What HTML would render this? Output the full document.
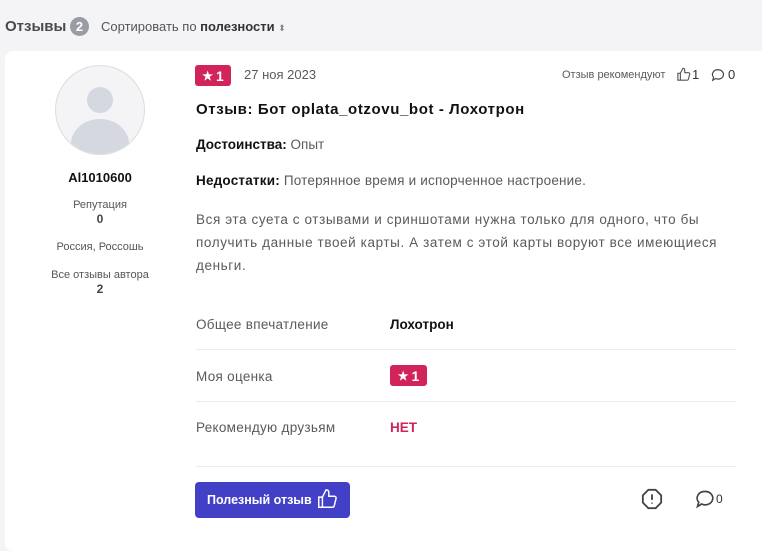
<!DOCTYPE html>
<html><head><meta charset="utf-8"><style>
*{margin:0;padding:0;box-sizing:border-box}
body{width:762px;height:540px;overflow:hidden;background:#f4f4f6;font-family:"Liberation Sans",sans-serif;color:#111;position:relative}
.a{position:absolute;white-space:nowrap}
.card{position:absolute;left:5px;top:51px;width:770px;height:500px;background:#fff;border-radius:8px}
.g{color:#5a5a5a}
.badge{position:absolute;background:#d0245a;color:#fff;border-radius:3px;font-weight:bold;font-size:14px;display:flex;align-items:center;justify-content:center;gap:3px}
.badge i{font-style:normal;font-size:12px}
.line{position:absolute;left:196px;width:540px;height:1px;background:#ebebeb}
</style></head><body>
<div class="a" style="left:5px;top:18px;font-size:15px;font-weight:bold;color:#4a4a4a">Отзывы</div>
<div class="a" style="left:70px;top:17px;width:19px;height:19px;border-radius:50%;background:#9a9ca3;color:#fff;font-size:13px;font-weight:bold;text-align:center;line-height:19px">2</div>
<div class="a" style="left:101px;top:19px;font-size:13px;color:#555">Сортировать по <b style="color:#333">полезности</b> <span style="font-size:9px;color:#888">⬍</span></div>
<div class="card"></div>
<div class="a" style="left:55px;top:65px;width:90px;height:90px;border-radius:50%;border:1px solid #ddd;background:#f4f4f6;overflow:hidden">
<div style="position:absolute;left:31px;top:21px;width:26px;height:26px;border-radius:50%;background:#d5d8e0"></div>
<div style="position:absolute;left:15px;top:53px;width:58px;height:50px;border-radius:50%;background:#d5d8e0"></div></div>
<div class="a" style="left:0;width:200px;text-align:center;top:170px;font-size:13px;font-weight:bold">Al1010600</div>
<div class="a" style="left:0;width:200px;text-align:center;top:199px;font-size:11px;color:#555">Репутация</div>
<div class="a" style="left:0;width:200px;text-align:center;top:212px;font-size:12px;font-weight:bold;color:#444">0</div>
<div class="a" style="left:0;width:200px;text-align:center;top:241px;font-size:11px;color:#555">Россия, Россошь</div>
<div class="a" style="left:0;width:200px;text-align:center;top:269px;font-size:11px;color:#555">Все отзывы автора</div>
<div class="a" style="left:0;width:200px;text-align:center;top:282px;font-size:12px;font-weight:bold;color:#444">2</div>
<div class="badge" style="left:195px;top:65px;width:36px;height:21px"><i>★</i>1</div>
<div class="a g" style="left:244px;top:67px;font-size:13px">27 ноя 2023</div>
<div class="a g" style="left:562px;top:69px;font-size:11px">Отзыв рекомендуют</div>
<svg class="a" style="left:676px;top:67px" width="15" height="15" viewBox="0 0 24 24" fill="none" stroke="#555" stroke-width="1.8"><path d="M7 10v11H3V10zM7 10l4-8c2 0 3 1 3 3v4h6c1 0 2 1 2 2l-2 8c0 1-1 2-2 2H7"/></svg>
<div class="a" style="left:692px;top:67px;font-size:13px;color:#333">1</div>
<svg class="a" style="left:711px;top:68px" width="14" height="14" viewBox="0 0 24 24" fill="none" stroke="#444" stroke-width="2"><path d="M12 3a9 8 0 1 1-4 15l-5 3 1.5-5A9 8 0 0 1 12 3z"/></svg>
<div class="a" style="left:728px;top:67px;font-size:13px;color:#333">0</div>
<div class="a" style="left:196px;top:101px;font-size:15px;font-weight:bold;letter-spacing:.6px">Отзыв: Бот oplata_otzovu_bot - Лохотрон</div>
<div class="a" style="left:196px;top:137px;font-size:13.5px"><b>Достоинства:</b> <span class="g">Опыт</span></div>
<div class="a" style="left:196px;top:173px;font-size:13.5px;letter-spacing:.2px"><b>Недостатки:</b> <span class="g">Потерянное время и испорченное настроение.</span></div>
<div class="a g" style="left:196px;top:208px;font-size:13.5px;line-height:23px;letter-spacing:.6px">Вся эта суета с отзывами и сриншотами нужна только для одного, что бы<br>получить данные твоей карты. А затем с этой карты воруют все имеющиеся<br>деньги.</div>
<div class="a g" style="left:196px;top:317px;font-size:13.5px;letter-spacing:.3px">Общее впечатление</div>
<div class="a" style="left:390px;top:317px;font-size:13.5px;font-weight:bold">Лохотрон</div>
<div class="line" style="top:349px"></div>
<div class="a g" style="left:196px;top:369px;font-size:13.5px;letter-spacing:.3px">Моя оценка</div>
<div class="badge" style="left:390px;top:365px;width:37px;height:21px"><i>★</i>1</div>
<div class="line" style="top:401px"></div>
<div class="a g" style="left:196px;top:420px;font-size:13.5px;letter-spacing:.3px">Рекомендую друзьям</div>
<div class="a" style="left:390px;top:420px;font-size:13.5px;font-weight:bold;color:#d0245a">НЕТ</div>
<div class="line" style="top:466px"></div>
<div class="a" style="left:195px;top:482px;width:155px;height:36px;background:#4340c8;border-radius:4px;color:#fff;font-size:12.5px;font-weight:bold;padding:11px 0 0 12px">Полезный отзыв</div>
<svg class="a" style="left:316px;top:488px" width="22" height="22" viewBox="0 0 24 24" fill="none" stroke="#fff" stroke-width="1.6"><path d="M7 10v11H3V10zM7 10l4-8c2 0 3 1 3 3v4h6c1 0 2 1 2 2l-2 8c0 1-1 2-2 2H7"/></svg>
<svg class="a" style="left:641px;top:488px" width="22" height="22" viewBox="0 0 24 24" fill="none" stroke="#444" stroke-width="2"><path d="M8 2h8l6 6v8l-6 6H8l-6-6V8z"/><path d="M12 7v6M12 16v1"/></svg>
<svg class="a" style="left:695px;top:489px" width="20" height="20" viewBox="0 0 24 24" fill="none" stroke="#444" stroke-width="2"><path d="M12 3a9 8 0 1 1-4 15l-5 3 1.5-5A9 8 0 0 1 12 3z"/></svg>
<div class="a" style="left:716px;top:492px;font-size:12px;color:#333">0</div>
</body></html>
